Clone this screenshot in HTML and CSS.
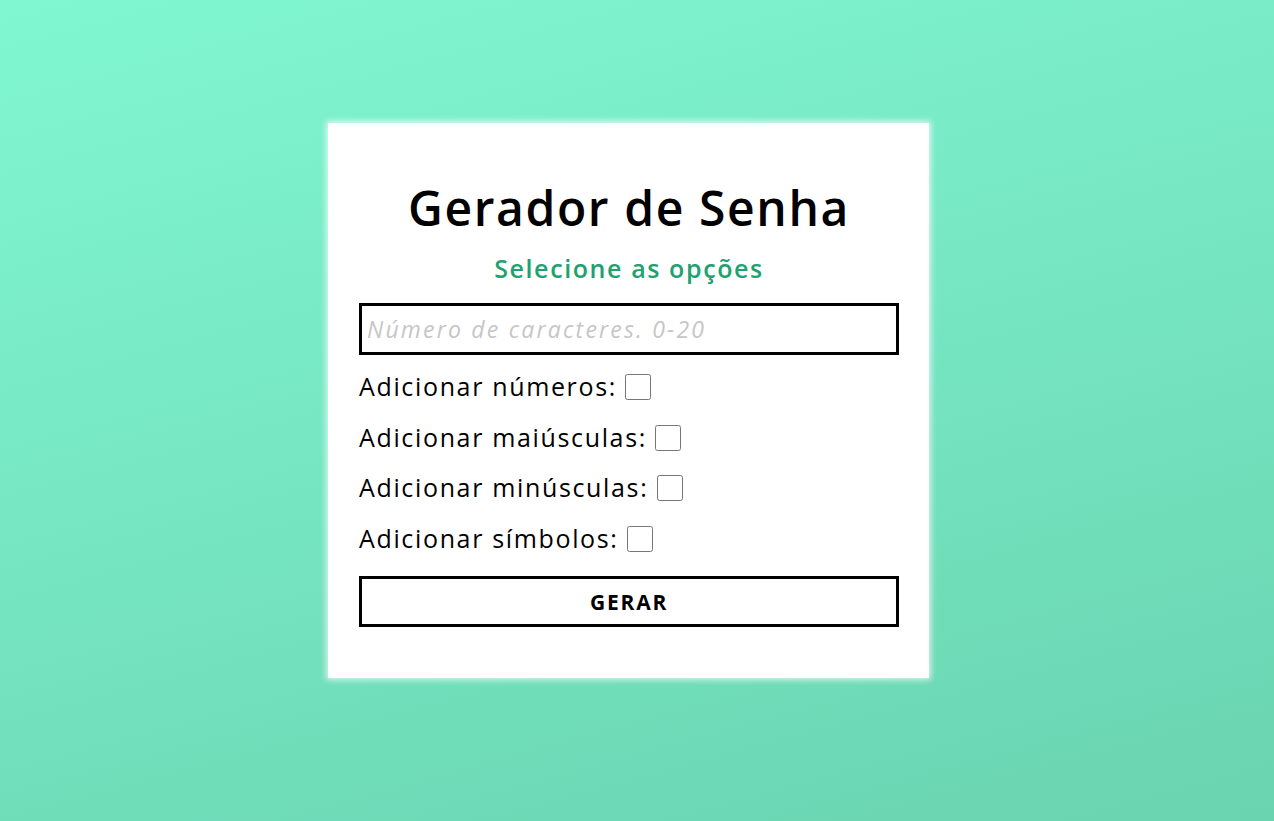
FILE: index.html
```html
<!DOCTYPE html>
<html lang="pt-BR">
<head>
<meta charset="utf-8">
<title>Gerador de Senha</title>
<link rel="stylesheet" href="styles.css">
</head>
<body>
<main class="page">
  <section class="card">
    <h1 class="title">Gerador de Senha</h1>
    <h2 class="subtitle">Selecione as opções</h2>
    <input class="length" type="number" placeholder="Número de caracteres. 0-20">
    <label class="option">Adicionar números: <input type="checkbox" class="check"></label>
    <label class="option">Adicionar maiúsculas: <input type="checkbox" class="check"></label>
    <label class="option">Adicionar minúsculas: <input type="checkbox" class="check"></label>
    <label class="option">Adicionar símbolos: <input type="checkbox" class="check"></label>
    <button class="generate" type="button">GERAR</button>
  </section>
</main>
</body>
</html>
```
FILE: styles.css
```css
* { box-sizing: border-box; }
html, body { margin: 0; padding: 0; height: 100%; }
body {
  font-family: "Open Sans", "Liberation Sans", sans-serif;
  background: linear-gradient(165deg, #80f7d1 0%, #6ad3b0 100%);
  color: #000;
}
.page {
  min-height: 100vh;
  display: flex;
  align-items: flex-start;
  justify-content: center;
  padding: 123px 17px 0 0;
}
.card {
  width: 601px;
  background: #fff;
  padding: 20px 30px 51px 31px;
  display: flex;
  flex-direction: column;
  box-shadow: 0 0 6px 2px rgba(255,255,255,0.7);
}
.title {
  margin: 29px 0 0;
  font-size: 48px;
  line-height: 72px;
  font-weight: 600;
  text-align: center;
  letter-spacing: 1.6px;
}
.subtitle {
  margin: 6px 0 0;
  font-size: 25px;
  line-height: 36px;
  font-weight: 600;
  text-align: center;
  letter-spacing: 1.6px;
  color: #20a16f;
}
.length {
  margin: 17px 0 0;
  height: 52px;
  width: 540px;
  border: 3px solid #000;
  border-radius: 0;
  padding: 0 5px;
  font-family: inherit;
  font-size: 23px;
  letter-spacing: 2.2px;
  outline: none;
  -moz-appearance: textfield;
}
.length::-webkit-outer-spin-button,
.length::-webkit-inner-spin-button { -webkit-appearance: none; margin: 0; }
.length::placeholder { color: #c6c6c6; font-style: italic; }
.option {
  display: flex;
  align-items: center;
  height: 50.5px;
  font-size: 25px;
  letter-spacing: 1.65px;
  white-space: pre;
}
.option:first-of-type { margin-top: 6px; }
.check {
  width: 26px;
  height: 26px;
  margin: 2px 0 0 0;
}
.generate {
  margin-top: 13px;
  height: 51px;
  width: 540px;
  background: #fff;
  border: 3px solid #000;
  font-family: inherit;
  font-size: 21px;
  font-weight: 700;
  letter-spacing: 1.8px;
  color: #000;
  cursor: pointer;
}
```
